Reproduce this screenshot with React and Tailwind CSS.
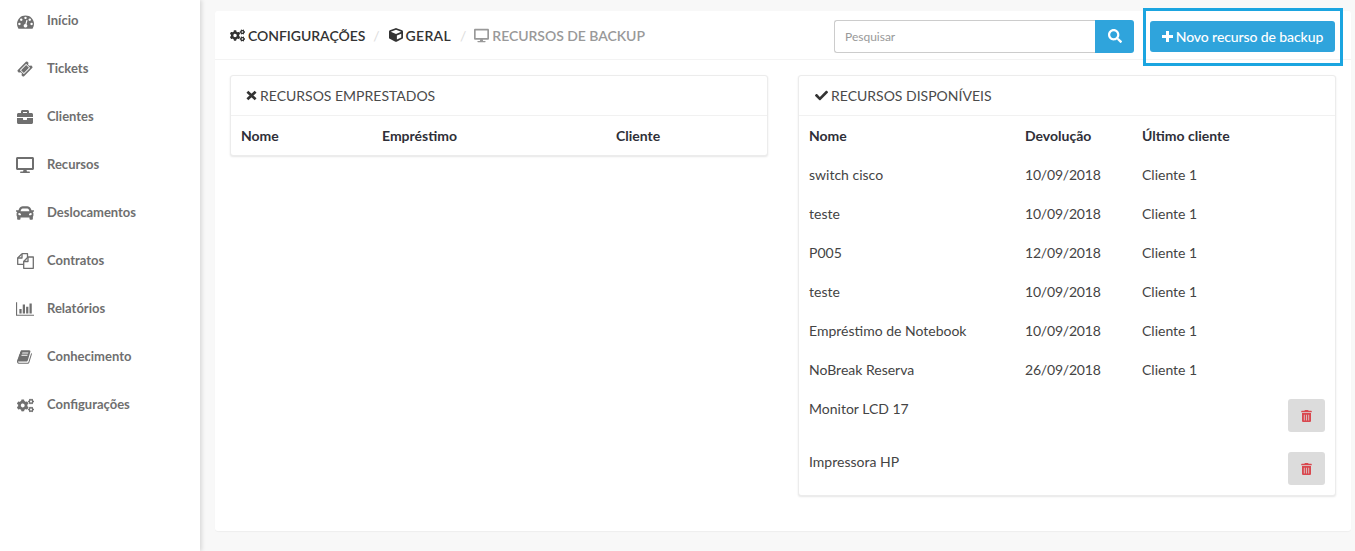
import React from "react";
import { FaBriefcase, FaDesktop, FaCar, FaCogs, FaCube, FaCheck, FaSearch, FaTrashAlt } from "react-icons/fa";

const Fa4 = ({ d, className, vb = "0 0 1792 1792" }) => (
  <svg viewBox={vb} className={className} fill="currentColor"><path d={d} /></svg>
);
const Tach = (p) => <Fa4 {...p} d="M384 1152q0-53-37.5-90.5t-90.5-37.5-90.5 37.5-37.5 90.5 37.5 90.5 90.5 37.5 90.5-37.5 37.5-90.5zm192-448q0-53-37.5-90.5t-90.5-37.5-90.5 37.5-37.5 90.5 37.5 90.5 90.5 37.5 90.5-37.5 37.5-90.5zm428 481l101-382q6-26-7.5-48.5t-38.5-29.5-48 6.5-30 39.5l-101 382q-60 5-107 43.5t-63 98.5q-20 77 20 146t117 89 146-20 89-117q16-60-6-117t-72-91zm660-33q0-53-37.5-90.5t-90.5-37.5-90.5 37.5-37.5 90.5 37.5 90.5 90.5 37.5 90.5-37.5 37.5-90.5zm-640-640q0-53-37.5-90.5t-90.5-37.5-90.5 37.5-37.5 90.5 37.5 90.5 90.5 37.5 90.5-37.5 37.5-90.5zm448 192q0-53-37.5-90.5t-90.5-37.5-90.5 37.5-37.5 90.5 37.5 90.5 90.5 37.5 90.5-37.5 37.5-90.5zm320 448q0 261-141 483-19 29-54 29h-1402q-35 0-54-29-141-221-141-483 0-182 71-348t191-286 286-191 348-71 348 71 286 191 191 286 71 348z" />;
const Ticket = (p) => <Fa4 {...p} d="M1024 452l316 316-572 572-316-316zm-211 979l618-618q19-19 19-45t-19-45l-362-362q-18-18-45-18t-45 18l-618 618q-19 19-19 45t19 45l362 362q18 18 45 18t45-18zm889-637l-907 908q-37 37-90.5 37t-90.5-37l-126-126q56-56 56-136t-56-136-136-56-136 56l-125-126q-37-37-37-90.5t37-90.5l907-906q37-37 90.5-37t90.5 37l125 125q-56 56-56 136t56 136 136 56 136-56l126 125q37 37 37 90.5t-37 90.5z" />;
const BarChart = (p) => <Fa4 {...p} vb="0 0 2048 1792" d="M640 896v512h-256v-512h256zm384-512v1024h-256v-1024h256zm1024 1152v128h-2048v-1536h128v1408h1920zm-640-896v768h-256v-768h256zm384-384v1152h-256v-1152h256z" />;
const Book = (p) => <Fa4 {...p} d="M1639 478q40 57 18 129l-275 906q-19 64-76.5 107.5t-122.5 43.5h-923q-77 0-148.5-53.5t-99.5-131.5q-24-67-2-127 0-4 3-27t4-37q1-8-3-21.5t-3-19.5q2-11 8-21t16.5-23.5 16.5-23.5q23-38 45-91.5t30-91.5q3-10 .5-30t-.5-28q3-11 17-28t17-23q21-36 42-92t25-90q1-9-2.5-32t.5-28q4-13 22-30.5t22-22.5q19-26 42.5-84.5t27.5-96.5q1-8-3-25.5t-2-26.5q2-8 9-18t18-23 17-21q8-12 16.5-30.5t15-35 16-36 19.5-32 26.5-23.5 36-11.5 47.5 5.5l-1 3q38-9 51-9h761q74 0 114 56t18 130l-274 906q-36 119-71.5 153.5t-128.5 34.5h-869q-27 0-38 15-11 16-1 43 24 70 144 70h923q29 0 56-15.5t35-41.5l300-987q7-22 5-57 38 15 59 43zm-1064 2q-4 13 2 22.5t20 9.5h608q13 0 25.5-9.5t16.5-22.5l21-64q4-13-2-22.5t-20-9.5h-608q-13 0-25.5 9.5t-16.5 22.5zm-83 256q-4 13 2 22.5t20 9.5h608q13 0 25.5-9.5t16.5-22.5l21-64q4-13-2-22.5t-20-9.5h-608q-13 0-25.5 9.5t-16.5 22.5z" />;
const Docs = ({ className }) => (
  <svg viewBox="0 0 17 16" className={className} fill="none" stroke="currentColor" strokeWidth="1.3" strokeLinejoin="round">
    <path d="M5 .7H10.5V4M5 .7L.7 5V11.3H6.7" />
    <path d="M5 .7V5H.7" />
    <path d="M11 4H16.3V15.3H6.7V8.5Z" />
    <path d="M11 4V8.5H6.7" />
  </svg>
);
const Plus = ({ className }) => (
  <svg viewBox="0 0 11 11" className={className} fill="currentColor"><path d="M4 0h3v4h4v3H7v4H4V7H0V4h4z" /></svg>
);
const Times = ({ className }) => (
  <svg viewBox="0 0 12 12" className={className} fill="none" stroke="currentColor" strokeWidth="3"><path d="M1.5 2L10.5 10M10.5 2L1.5 10" /></svg>
);

const nav = [
  ["Início", Tach, "w-[17px] h-[17px]"],
  ["Tickets", Ticket, "w-[16px] h-[16px]"],
  ["Clientes", FaBriefcase, "w-[16px] h-[16px]"],
  ["Recursos", FaDesktop, "w-[18px] h-[18px]"],
  ["Deslocamentos", FaCar, "w-[18px] h-[18px]"],
  ["Contratos", Docs, "w-[17px] h-[16px]"],
  ["Relatórios", BarChart, "w-[18px] h-[16px]"],
  ["Conhecimento", Book, "w-[16px] h-[16px]"],
  ["Configurações", FaCogs, "w-[17px] h-[17px]"],
];

const rows = [
  ["switch cisco", "10/09/2018", "Cliente 1"],
  ["teste", "10/09/2018", "Cliente 1"],
  ["P005", "12/09/2018", "Cliente 1"],
  ["teste", "10/09/2018", "Cliente 1"],
  ["Empréstimo de Notebook", "10/09/2018", "Cliente 1"],
  ["NoBreak Reserva", "26/09/2018", "Cliente 1"],
];

const Panel = ({ icon: Icon, title, className = "", head = "", iconSize = "", children }) => (
  <section className={`bg-white rounded-[3px] border border-[#ececec] shadow-[0_1px_2px_rgba(0,0,0,0.1)] ${className}`}>
    <h2 className={`h-10 flex items-center border-b border-[#f1f1f1] text-[14px] leading-5 font-normal text-[#4a4a4a] ${head}`}>
      <Icon className={`text-[#333] ${iconSize}`} />
      {title}
    </h2>
    {children}
  </section>
);

export default function App() {
  return (
    <div className="flex h-[551px] overflow-hidden bg-[#f8f8f8] text-[14px] text-[#333] font-['Lato',sans-serif]">
      <aside className="w-[200px] shrink-0 bg-white shadow-[2px_0_4px_rgba(0,0,0,0.12)] pt-[11px]">
        <ul className="flex flex-col gap-7">
          {nav.map(([label, Icon, size]) => (
            <li key={label} className="h-5 flex items-center pl-4 text-[13px] font-bold text-[#6f6f6f]">
              <span className="w-[18px] mr-[13px] flex items-center justify-center"><Icon className={size} /></span>
              {label}
            </li>
          ))}
        </ul>
      </aside>

      <main className="flex-1 pl-[15px] pr-1 pt-[11px]">
        <div className="h-[520px] bg-white rounded-[3px] shadow-[0_1px_1px_rgba(0,0,0,0.04)]">
          <header className="h-[49px] border-b border-[#f3f3f3] flex items-center pt-[2px] pl-[15px] pr-4">
            <nav className="flex-1 flex items-center pb-[2px] text-[14px] font-semibold tracking-[-0.05px] text-[#333]">
              <FaCogs className="w-[15px] h-[15px] mr-[3px]" />CONFIGURAÇÕES
              <span className="ml-[8px] mr-[9px] text-[#ddd] font-normal">/</span>
              <FaCube className="w-[14px] h-[14px] mr-[3px]" /><span className="tracking-[0.3px]">GERAL</span>
              <span className="ml-[9px] mr-[8px] text-[#ddd] font-normal">/</span>
              <FaDesktop className="w-[15px] h-[15px] mr-[3px] text-[#999]" /><span className="text-[#999]">RECURSOS DE BACKUP</span>
            </nav>
            <div className="flex h-[33px] w-[300px] mr-4">
              <input placeholder="Pesquisar" className="flex-1 min-w-0 border border-[#ccc] border-r-0 rounded-l-[3px] pl-[10px] pr-[10px] pt-[2px] text-[12px] placeholder:text-[#999] outline-none" />
              <button className="w-[39px] bg-[#2fa4dc] rounded-r-[3px] text-white flex items-center justify-center"><FaSearch className="w-[14px] h-[14px]" /></button>
            </div>
            <div className="relative">
              <button className="w-[185px] h-[31px] bg-[#2fa4dc] rounded-[3px] text-white text-[14px] font-medium tracking-[-0.1px] flex items-center justify-center gap-[3px]">
                <Plus className="w-[11px] h-[11px]" />Novo recurso de backup
              </button>
              <span className="absolute -left-[7px] -top-[13px] w-[200px] h-[58px] border-[3px] border-[#1ba5e0]" />
            </div>
          </header>

          <div className="grid grid-cols-2 gap-[30px] px-[15px] pt-[15px] items-start">
            <Panel icon={Times} title="RECURSOS EMPRESTADOS" className="h-[81px]" head="pl-[15px] gap-[3px]" iconSize="w-[11px] h-[11px]">
              <div className="grid grid-cols-[141px_234px_1fr] px-[10px] h-[39px] items-center font-bold text-[#2f2f38]">
                <span>Nome</span><span>Empréstimo</span><span>Cliente</span>
              </div>
            </Panel>

            <Panel icon={FaCheck} title="RECURSOS DISPONÍVEIS" className="h-[421px]" head="pl-[16px] gap-[3px]" iconSize="w-[13px] h-[13px]">
              <div className="grid grid-cols-[216px_117px_1fr] px-[10px] h-[39px] items-center font-bold text-[#2f2f38]">
                <span>Nome</span><span>Devolução</span><span>Último cliente</span>
              </div>
              {rows.map(([a, b, c], i) => (
                <div key={i} className="grid grid-cols-[216px_117px_1fr] px-[10px] h-[39px] items-center text-[#444]">
                  <span>{a}</span><span className="tracking-[-0.2px]">{b}</span><span>{c}</span>
                </div>
              ))}
              {["Monitor LCD 17", "Impressora HP"].map((n) => (
                <div key={n} className="flex justify-between items-start px-[10px] h-[53px] pt-[10px] text-[#444]">
                  <span className="leading-5">{n}</span>
                  <button className="w-[37px] h-[33px] bg-[#dcdcdc] rounded-[3px] flex items-center justify-center text-[#d9484f]">
                    <FaTrashAlt className="w-[11px] h-[12px]" />
                  </button>
                </div>
              ))}
            </Panel>
          </div>
        </div>
      </main>
    </div>
  );
}
